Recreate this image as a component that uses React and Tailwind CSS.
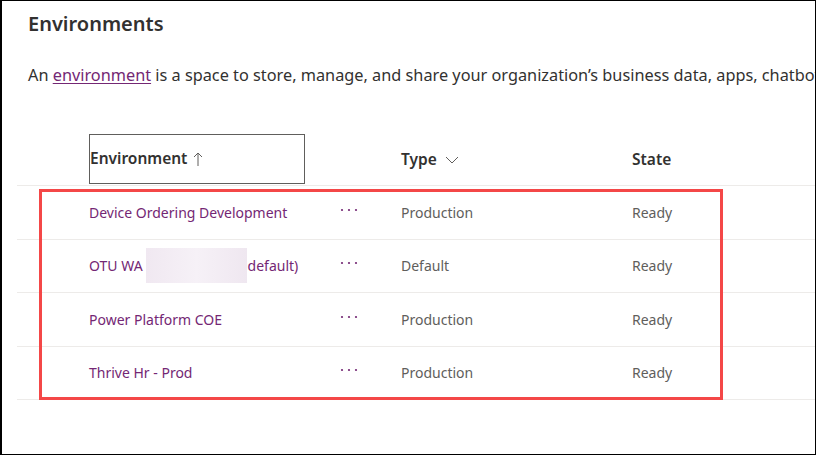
import React from "react";

const rows = [
  { name: "Device Ordering Development", type: "Production", state: "Ready" },
  { name: "OTU WA", hidden: true, tail: "default)", type: "Default", state: "Ready" },
  { name: "Power Platform COE", type: "Production", state: "Ready" },
  { name: "Thrive Hr - Prod", type: "Production", state: "Ready" },
];

function Dots() {
  return (
    <svg width="18" height="6" viewBox="0 0 18 6" className="text-[#742774]">
      <circle cx="2" cy="3" r="1.1" fill="currentColor" />
      <circle cx="9" cy="3" r="1.1" fill="currentColor" />
      <circle cx="16" cy="3" r="1.1" fill="currentColor" />
    </svg>
  );
}

export default function App() {
  return (
    <div
      className="relative w-[816px] h-[455px] overflow-hidden bg-white border border-l-2 border-black text-[#323130]"
      style={{ fontFamily: '"Noto Sans", "Open Sans", sans-serif' }}
    >
      {/* header */}
      <h1 className="ml-[26px] mt-[9px] text-[20px] leading-[28px] font-semibold">Environments</h1>
      <p className="ml-[26px] mt-[27px] text-[16.3px] leading-[20px] whitespace-nowrap">
        An{" "}
        <span className="text-[#742774] underline underline-offset-2">environment</span> is a space to
        store, manage, and share your organization’s business data, apps, chatbots, and flows.
      </p>

      {/* table */}
      <div className="ml-[15px] mt-[45px]">
        <div className="flex items-end h-[56px] border-b border-[#edebe9] pl-[72px]">
          <div className="w-[216px] h-[50px] mb-[1px] border border-[#605e5c] flex items-center gap-[6px] font-semibold text-[15.5px]">
            <span>Environment</span>
            <svg width="10" height="14" viewBox="0 0 10 14" className="text-[#605e5c]">
              <path d="M5 1v13M1 5l4-4 4 4" fill="none" stroke="currentColor" strokeWidth="1" />
            </svg>
          </div>
          <div className="w-[96px]" />
          <div className="w-[231px] h-[50px] flex items-center gap-[8px] font-semibold text-[15.5px]">
            <span>Type</span>
            <svg width="14" height="8" viewBox="0 0 14 8" className="text-[#605e5c]">
              <path d="M1 1l6 6 6-6" fill="none" stroke="currentColor" strokeWidth="1" />
            </svg>
          </div>
          <div className="h-[50px] flex items-center font-semibold text-[15.5px]">State</div>
        </div>

        {rows.map((r) => (
          <div
            key={r.name}
            className="flex items-center h-[53.5px] border-b border-[#edebe9] pl-[72px] text-[14px]"
          >
            <div className="w-[251px] flex items-center text-[#742774] whitespace-nowrap">
              <span>{r.name}</span>
              {r.hidden && (
                <>
                  <span className="ml-[3px] w-[101px] h-[35px] bg-gradient-to-r from-[#f0e8f1] via-[#f6f1f7] to-[#efe7f0]" />
                  <span className="ml-[1px]">{r.tail}</span>
                </>
              )}
            </div>
            <div className="w-[61px] -mt-[5px]">
              <Dots />
            </div>
            <div className="w-[231px] text-[#605e5c]">{r.type}</div>
            <div className="text-[#605e5c]">{r.state}</div>
          </div>
        ))}
      </div>

      {/* highlight */}
      <div className="absolute left-[37px] top-[188px] w-[684px] h-[211px] border-[3px] border-[#f44747]" />
    </div>
  );
}
